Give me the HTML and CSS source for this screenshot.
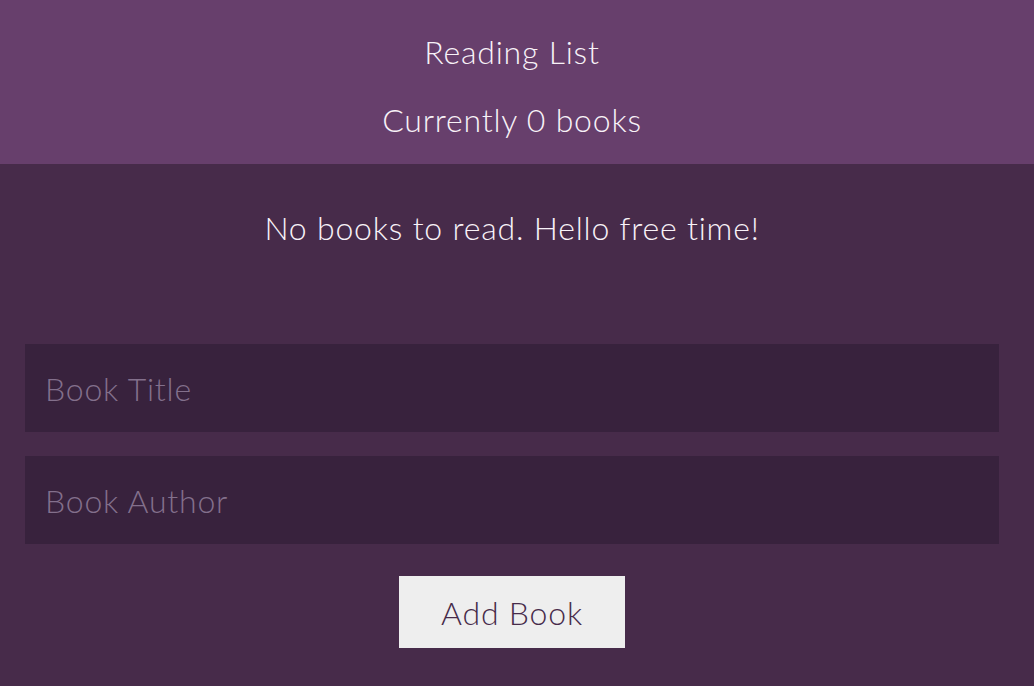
FILE: index.html
```html
<!DOCTYPE html>
<html lang="en">
<head>
<meta charset="utf-8">
<title>Reading List</title>
<link rel="stylesheet" href="styles.css">
</head>
<body>
<header class="header">
  <h1 class="title">Reading List</h1>
  <p class="count">Currently 0 books</p>
</header>
<main class="main">
  <p class="empty">No books to read. Hello free time!</p>
  <form class="form">
    <input class="field" type="text" placeholder="Book Title">
    <input class="field" type="text" placeholder="Book Author">
    <button class="btn" type="button">Add Book</button>
  </form>
</main>
</body>
</html>
```
FILE: styles.css
```css
* { box-sizing: border-box; }
html, body {
  margin: 0;
  padding: 0;
  background: #472b4a;
  font-family: "Lato", "Open Sans", sans-serif;
  font-weight: 300;
  letter-spacing: 0.8px;
  color: #f8f2f8;
}
.header {
  background: #673f6c;
  padding: 18px 10px 10px 0;
  text-align: center;
}
.title, .count {
  margin: 0;
  font-size: 32px;
  font-weight: 300;
  line-height: 68px;
}
.main {
  padding: 32px 35px 40px 25px;
  text-align: center;
}
.empty {
  margin: 0 0 84px;
  font-size: 32px;
  line-height: 64px;
}
.form {
  display: flex;
  flex-direction: column;
  align-items: center;
  gap: 24px;
}
.field {
  width: 100%;
  height: 88px;
  border: none;
  outline: none;
  background: #38223d;
  color: #f8f2f8;
  font-family: inherit;
  font-weight: 300;
  letter-spacing: 0.8px;
  font-size: 32px;
  padding: 0 20px;
}
.field::placeholder { color: #83708c; }
.btn {
  margin-top: 8px;
  min-width: 226px;
  height: 72px;
  border: none;
  background: #eeeeee;
  color: #472b4a;
  font-family: inherit;
  font-weight: 300;
  letter-spacing: 0.8px;
  font-size: 32px;
  padding: 0 40px;
}
```
